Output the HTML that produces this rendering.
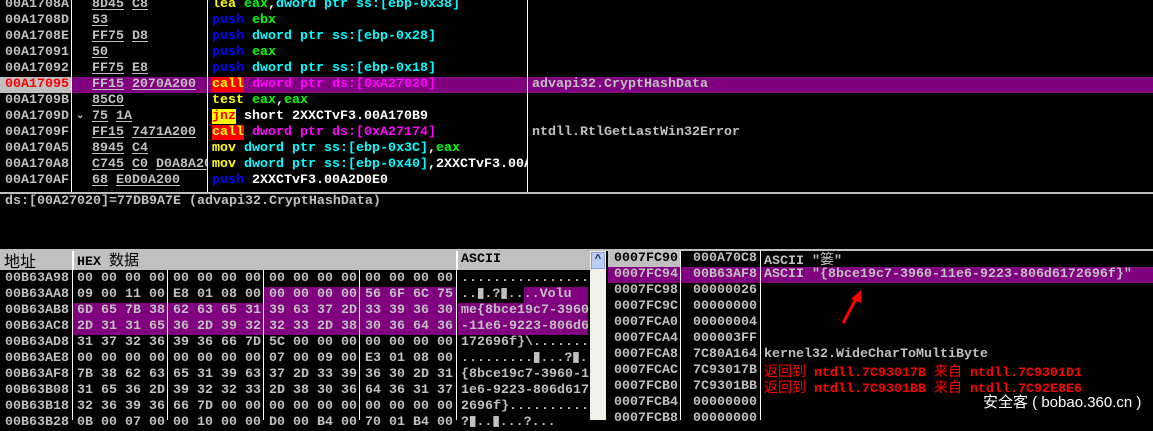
<!DOCTYPE html>
<html><head><meta charset="utf-8"><style>
*{margin:0;padding:0;box-sizing:border-box}
body{width:1153px;height:420px;background:#000;position:relative;overflow:hidden;font-family:"Liberation Mono","Noto Sans CJK SC",monospace;font-weight:bold;font-size:13.33px;line-height:16px;color:#c0c0c0}
.a{position:absolute;white-space:pre}
.r{position:absolute;height:16px}
.v{position:absolute;background:#fff;width:1px}
.u{text-decoration:underline;text-underline-offset:2px}
.y{color:#ff0}.b{color:#0000ff}.g{color:#0f0}.c{color:#0ff}.m{color:#f0f}.w{color:#fff}
.call{background:#f00;color:#ff0}.jnz{background:#ff0;color:#f00}
.p{position:absolute;background:#800080}
.cjk{font-family:"Noto Sans CJK SC","WenQuanYi Zen Hei",sans-serif;font-weight:normal;font-size:14px}
.ln{position:absolute;white-space:pre;height:16px;line-height:16px;overflow:visible}
</style></head><body>
<!-- top disasm -->
<div class="p" style="left:72px;top:77px;width:1081px;height:16px"></div>
<div class="r" style="left:0;top:77px;width:71px;background:#c0c0c0"></div>
<div class="v" style="left:71px;top:0;height:192px"></div>
<div class="v" style="left:207px;top:0;height:192px"></div>
<div class="v" style="left:527px;top:0;height:192px"></div>
<div class="a" style="left:5px;top:-3px">00A1708A
00A1708D
00A1708E
00A17091
00A17092
<span style="color:#f00">00A17095</span>
00A1709B
00A1709D
00A1709F
00A170A5
00A170A8
00A170AF</div>
<div class="a" style="left:92px;top:-3px;width:115px;overflow:hidden"><span class="u">8D45</span> <span class="u">C8</span>
<span class="u">53</span>
<span class="u">FF75</span> <span class="u">D8</span>
<span class="u">50</span>
<span class="u">FF75</span> <span class="u">E8</span>
<span class="u">FF15</span> <span class="u">2070A200</span>
<span class="u">85C0</span>
<span class="u">75</span> <span class="u">1A</span>
<span class="u">FF15</span> <span class="u">7471A200</span>
<span class="u">8945</span> <span class="u">C4</span>
<span class="u">C745</span> <span class="u">C0</span> <span class="u">D0A8A200</span>
<span class="u">68</span> <span class="u">E0D0A200</span></div>
<div class="a" style="left:76px;top:109px;font-size:10px">⌄</div>
<div class="a" style="left:212px;top:-3px;width:315px;overflow:hidden"><span class="y">lea</span> <span class="g">eax</span><span class="w">,</span><span class="c">dword ptr ss:[ebp-0x38]</span>
<span class="b">push</span> <span class="g">ebx</span>
<span class="b">push</span> <span class="c">dword ptr ss:[ebp-0x28]</span>
<span class="b">push</span> <span class="g">eax</span>
<span class="b">push</span> <span class="c">dword ptr ss:[ebp-0x18]</span>
<span class="call">call</span> <span class="m">dword ptr ds:[0xA27020]</span>
<span class="y">test</span> <span class="g">eax</span><span class="w">,</span><span class="g">eax</span>
<span class="jnz">jnz</span><span class="w"> short 2XXCTvF3.00A170B9</span>
<span class="call">call</span> <span class="m">dword ptr ds:[0xA27174]</span>
<span class="y">mov</span> <span class="c">dword ptr ss:[ebp-0x3C]</span><span class="w">,</span><span class="g">eax</span>
<span class="y">mov</span> <span class="c">dword ptr ss:[ebp-0x40]</span><span class="w">,2XXCTvF3.00A2</span>
<span class="b">push</span><span class="w"> 2XXCTvF3.00A2D0E0</span></div>
<div class="a" style="left:532px;top:77px">advapi32.CryptHashData</div>
<div class="a" style="left:532px;top:125px">ntdll.RtlGetLastWin32Error</div>
<div class="r" style="left:0;top:192px;width:1153px;height:2px;background:#c0c0c0"></div>
<div class="a" style="left:5px;top:194px">ds:[00A27020]=77DB9A7E (advapi32.CryptHashData)</div>
<div class="r" style="left:0;top:249px;width:1153px;height:2px;background:#c0c0c0"></div>
<!-- hex header -->
<div class="r" style="left:0;top:251px;width:590px;height:19px;background:#c0c0c0;color:#000"></div>
<div class="a cjk" style="left:4px;top:251px;font-size:16px;line-height:19px;color:#000">地址</div>
<div class="a" style="left:77px;top:252px;color:#000">HEX <span class="cjk" style="font-size:15px;line-height:16px">数据</span></div>
<div class="a" style="left:461px;top:252px;color:#000">ASCII</div>
<div class="r" style="left:72px;top:251px;width:2px;height:19px;background:#fff"></div>
<div class="r" style="left:456px;top:251px;width:2px;height:19px;background:#fff"></div>
<div class="r" style="left:590px;top:251px;width:16px;height:169px;background:#f0f0e8"></div>
<div class="r" style="left:591px;top:252px;width:14px;height:17px;background:#b8ccf4;border:1px solid #8aa0d8;color:#224;font-size:11px;line-height:14px;text-align:center">^</div>
<!-- hex highlights -->
<div class="p" style="left:263px;top:287px;width:193px;height:16px"></div>
<div class="p" style="left:72px;top:303px;width:384px;height:32px"></div>
<div class="p" style="left:72px;top:319px;width:264px;height:16px"></div>
<div class="p" style="left:524px;top:287px;width:64px;height:16px"></div>
<div class="p" style="left:458px;top:303px;width:130px;height:32px"></div>
<div class="p" style="left:458px;top:319px;width:92px;height:16px"></div>
<div class="v" style="left:72px;top:270px;height:150px"></div>
<div class="v" style="left:167px;top:270px;height:150px"></div>
<div class="v" style="left:263px;top:270px;height:150px"></div>
<div class="v" style="left:359px;top:270px;height:150px"></div>
<div class="v" style="left:456px;top:270px;height:150px"></div>
<div class="a" style="left:5px;top:271px">00B63A98
00B63AA8
00B63AB8
00B63AC8
00B63AD8
00B63AE8
00B63AF8
00B63B08
00B63B18
00B63B28</div>
<div class="a" style="left:77px;top:271px">00 00 00 00
09 00 11 00
6D 65 7B 38
2D 31 31 65
31 37 32 36
00 00 00 00
7B 38 62 63
31 65 36 2D
32 36 39 36
0B 00 07 00</div>
<div class="a" style="left:173px;top:271px">00 00 00 00
E8 01 08 00
62 63 65 31
36 2D 39 32
39 36 66 7D
00 00 00 00
65 31 39 63
39 32 32 33
66 7D 00 00
00 10 00 00</div>
<div class="a" style="left:269px;top:271px">00 00 00 00
00 00 00 00
39 63 37 2D
32 33 2D 38
5C 00 00 00
07 00 09 00
37 2D 33 39
2D 38 30 36
00 00 00 00
D0 00 B4 00</div>
<div class="a" style="left:365px;top:271px">00 00 00 00
56 6F 6C 75
33 39 36 30
30 36 64 36
00 00 00 00
E3 01 08 00
36 30 2D 31
64 36 31 37
00 00 00 00
70 01 B4 00</div>
<div class="a" style="left:461px;top:271px;width:129px;overflow:hidden">................
..▮.?▮....Volu
me{8bce19c7-3960
-11e6-9223-806d6
172696f}\.......
.........▮...?▮.
{8bce19c7-3960-1
1e6-9223-806d617
2696f}..........
?▮..▮...?...</div>
<!-- stack -->
<div class="r" style="left:608px;top:251px;width:72px;height:16px;background:#c0c0c0"></div>
<div class="p" style="left:608px;top:267px;width:545px;height:16px"></div>
<div class="v" style="left:680px;top:251px;height:169px"></div>
<div class="v" style="left:760px;top:251px;height:169px"></div>
<div class="a" style="left:614px;top:251px"><span style="color:#000">0007FC90</span>
0007FC94
0007FC98
0007FC9C
0007FCA0
0007FCA4
0007FCA8
0007FCAC
0007FCB0
0007FCB4
0007FCB8</div>
<div class="a" style="left:693px;top:251px">000A70C8
00B63AF8
00000026
00000000
00000004
000003FF
7C80A164
7C93017B
7C9301BB
00000000
00000000</div>
<div class="ln" style="left:764px;top:251px">ASCII "<span class="cjk">篓</span>"</div>
<div class="ln" style="left:764px;top:267px">ASCII "{8bce19c7-3960-11e6-9223-806d6172696f}"</div>
<div class="ln" style="left:764px;top:347px">kernel32.WideCharToMultiByte</div>
<div class="ln" style="left:764px;top:363px;color:#f00"><span class="cjk">返回到</span> ntdll.7C93017B <span class="cjk">来自</span> ntdll.7C9301D1</div>
<div class="ln" style="left:764px;top:379px;color:#f00"><span class="cjk">返回到</span> ntdll.7C9301BB <span class="cjk">来自</span> ntdll.7C92E8E6</div>
<svg class="a" style="left:830px;top:285px" width="40" height="45"><line x1="13" y1="38" x2="27" y2="12" stroke="#f00" stroke-width="3"/><polygon points="31,5 21,14 31,18" fill="#f00"/></svg>
<div class="a" style="left:983px;top:393px;color:#fff;font-family:'Liberation Sans','Noto Sans CJK SC',sans-serif;font-weight:normal;font-size:15px;line-height:20px;text-shadow:0 0 2px #000">安全客 ( bobao.360.cn )</div>
</body></html>
